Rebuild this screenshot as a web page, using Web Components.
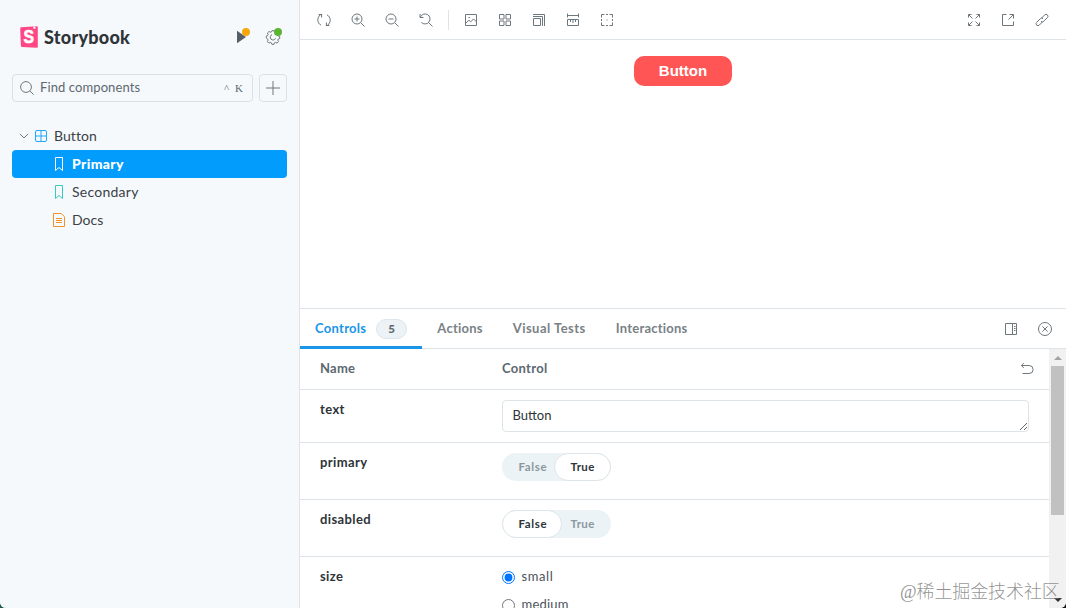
<!DOCTYPE html>
<html lang="en">
<head>
<meta charset="utf-8">
<title>Button / Primary - Storybook</title>
<style>
  * {
    box-sizing: border-box;
  }
  body {
    margin: 0;
    height: 608px;
    overflow: hidden;
    font-family: Lato, "Liberation Sans", sans-serif;
    font-size: 14px;
    color: #2e3438;
    background: linear-gradient(90deg, #1f5b49 50%, #1c1c1c 50%);
    --border: #dde3e6;
    --blue: #029cfd;
    --icon: #6d777e;
  }
</style>
</head>
<body>
<sb-app>
  <sb-sidebar slot="sidebar">
    <sb-tree-item icon="component" type="component" style="--ls: .05px">Button</sb-tree-item>
    <sb-tree-item icon="bookmark" type="story" selected style="--ls: .35px">Primary</sb-tree-item>
    <sb-tree-item icon="bookmark" type="story" style="--ls: .25px">Secondary</sb-tree-item>
    <sb-tree-item icon="document" type="docs" style="--ls: .05px">Docs</sb-tree-item>
  </sb-sidebar>
  <sb-toolbar slot="toolbar"></sb-toolbar>
  <story-button slot="preview">Button</story-button>
  <sb-panel slot="panel">
    <sb-tab slot="tabs" active count="5" style="--ls: .28px">Controls</sb-tab>
    <sb-tab slot="tabs" style="--ls: .22px">Actions</sb-tab>
    <sb-tab slot="tabs" style="--ls: .48px">Visual Tests</sb-tab>
    <sb-tab slot="tabs" style="--ls: .22px">Interactions</sb-tab>
    <sb-arg-row head name="Name"><span>Control</span><sb-icon name="undo"></sb-icon></sb-arg-row>
    <sb-arg-row name="text" style="--h: 53px"><sb-textarea>Button</sb-textarea></sb-arg-row>
    <sb-arg-row name="primary"><sb-toggle value="true"></sb-toggle></sb-arg-row>
    <sb-arg-row name="disabled"><sb-toggle value="false"></sb-toggle></sb-arg-row>
    <sb-arg-row name="size" style="--h: 110px">
      <sb-radio checked style="--ls: .6px">small</sb-radio>
      <sb-radio>medium</sb-radio>
    </sb-arg-row>
  </sb-panel>
</sb-app>
<water-mark>稀土掘金技术社区</water-mark>

<script>
const icons = {
  sync: '<path d="M5.2 1.2C2.6 1.5.8 4 .8 6.8c0 2.3 1.200 4.400 3.200 5.400M1.600 1.500h3v3M8.800 12.800c2.600-.3 4.400-2.800 4.400-5.600 0-2.300-1.200-4.400-3.200-5.400M12.400 12.500h-3v-3"/>',
  zoom: '<circle cx="6" cy="6" r="5"/><path d="M9.7 9.7l3.8 3.8M3.5 6h5M6 3.5v5"/>',
  zoomout: '<circle cx="6" cy="6" r="5"/><path d="M9.7 9.7l3.8 3.8M3.5 6h5"/>',
  zoomreset: '<path d="M1 1v3.5h3.5M1.3 4.3A5 5 0 1 1 2.4 9.4M9.7 9.7l3.8 3.8"/>',
  photo: '<path d="M1.5 1.5h11v11h-11zM1.5 10.5l3.4-3.3 1.8 1.7 2.8-3 3 3M4.5 4.5h1.5"/>',
  grid: '<path d="M1.5 1.5H6V6H1.5zM8 1.5h4.500V6H8zM1.5 8H6v4.500H1.5zM8 8h4.500v4.500H8z"/>',
  viewport: '<path d="M1.5 5.5h7v7h-7zM1 3.5h9.5v9.5M1 1.5h11.5V13"/>',
  ruler: '<path d="M1.5.5v4M12.5.5v4M1.5 2.5h11M1.5 6.5h11v6h-11zM4.5 7v2M7 7v3M9.5 7v2"/>',
  outline: '<path d="M1.5 4.5v-3h3M9.5 1.5h3v3M12.5 9.5v3h-3M4.5 12.5h-3v-3M6 1.5h2M6 12.5h2M1.5 6v2M12.5 6v2M6.5 7h1"/>',
  expand: '<path d="M1.5 4.5v-3h3M9.5 1.5h3v3M12.5 9.5v3h-3M4.5 12.5h-3v-3M1.5 1.5l4 4M12.5 1.5l-4 4M12.5 12.5l-4-4M1.5 12.5l4-4"/>',
  share: '<path d="M5.5 1.5h-4v11h11v-4M8.5 1.5h4v4M12.5 1.5l-5 5"/>',
  link: '<path d="M6.3 5.3l3.400-3.400a1.900 1.900 0 0 1 2.700 2.700L8.700 8.300a1.900 1.900 0 0 1-2.700 0M7.700 8.700l-3.400 3.400a1.900 1.900 0 0 1-2.700-2.700L5.300 5.700a1.900 1.900 0 0 1 2.700 0"/>',
  sidebaralt: '<path d="M1.5 1.5h11v11h-11zM8.5 1.5v11M10 4.5h1.5M10 6.5h1.5M10 8.5h1.5"/>',
  close: '<circle cx="7" cy="7" r="6.5"/><path d="M4.4 4.4l5.2 5.2M9.6 4.4L4.4 9.6"/>',
  undo: '<path d="M3.800 1.200L1.300 3.500l2.500 2.300M1.500 3.500h7.600a3.500 3.500 0 0 1 0 8H2.500"/>',
  search: '<circle cx="6" cy="6" r="5.4"/><path d="M9.9 9.9l3.7 3.7"/>',
  plus: '<path d="M7 0v14M0 7h14"/>',
  play: '<path d="M3 .8l9 6.2-9 6.2z" fill="currentColor" stroke="none"/>',
  cog: '<path d="M5.9.7h2.2l.5 1.6 1 .4L11 2l1.6 1.5-.8 1.5.4 1 1.5.5v2.1l-1.5.5-.4 1 .7 1.5L11 13.1l-1.5-.7-1 .4-.5 1.5H5.9l-.5-1.5-1-.4-1.5.7-1.5-1.5.7-1.5-.4-1L.3 8.1V6l1.4-.5.4-1L1.4 3 3 1.5l1.5.7 1-.4z"/><path d="M9.6 8.3A2.8 2.8 0 1 1 6 4.6"/>',
  chevron: '<path d="M2.8 4.8L7 9l4.2-4.2"/>',
  component: '<rect x="1.5" y="1.5" width="11" height="11" rx="1.5"/><path d="M7 1.5v11M1.5 7h11"/>',
  bookmark: '<path d="M3.5.5h7v13L7 10.5l-3.5 3z"/>',
  document: '<path d="M1.5.5h7.8l3.2 3.2v9.8h-11zM4 5.5h6M4 7.5h6M4 9.5h6"/>'
}

class SbIcon extends HTMLElement {
  connectedCallback() {
    const shadow = this.attachShadow({ mode: "open" })
    shadow.innerHTML = /* html */ `
      <style>
        :host {
          display: inline-flex;
          flex: none;
          width: 14px;
          height: 14px;
          color: var(--icon);
        }
        svg {
          width: 100%;
          height: 100%;
          overflow: visible;
          fill: none;
          stroke: currentColor;
          stroke-width: 1;
        }
      </style>
      <svg viewBox="0 0 14 14">${icons[this.getAttribute("name")]}</svg>
    `
  }
}

class SbApp extends HTMLElement {
  connectedCallback() {
    this.attachShadow({ mode: "open" }).innerHTML = /* html */ `
      <style>
        :host {
          display: grid;
          grid-template-columns: 300px 1fr;
          width: 1066px;
          height: 608px;
          overflow: hidden;
          background: #fff;
          border-radius: 0 0 6px 6px;
        }
        main {
          display: grid;
          grid-template-rows: 40px 268px 300px;
          min-width: 0;
        }
        .preview {
          display: flex;
          justify-content: center;
          align-items: flex-start;
          padding-top: 16px;
        }
      </style>
      <slot name="sidebar"></slot>
      <main>
        <slot name="toolbar"></slot>
        <div class="preview"><slot name="preview"></slot></div>
        <slot name="panel"></slot>
      </main>
    `
  }
}

class SbSidebar extends HTMLElement {
  connectedCallback() {
    this.attachShadow({ mode: "open" }).innerHTML = /* html */ `
      <style>
        * {
          box-sizing: border-box;
        }
        :host {
          display: block;
          box-sizing: border-box;
          height: 608px;
          padding: 23px 12px 0;
          background: #f6f9fc;
          border-right: 1px solid var(--border);
        }
        header {
          display: flex;
          align-items: center;
          height: 28px;
          padding-left: 8px;
        }
        .logo {
          width: 18px;
          height: 22px;
          margin-right: 6px;
        }
        .logo text {
          font: bold 18px "Liberation Sans", sans-serif;
          stroke: #fff;
          stroke-width: .6px;
        }
        .brand {
          flex: 1;
          font-size: 18px;
          font-weight: 900;
          letter-spacing: .25px;
        }
        .action {
          display: flex;
          position: relative;
          align-items: center;
          justify-content: center;
          width: 28px;
          height: 28px;
          margin-left: 4px;
        }
        .action sb-icon[name="play"] {
          color: #565e66;
        }
        .action i {
          position: absolute;
          top: 5px;
          right: 5px;
          width: 8px;
          height: 8px;
          border-radius: 50%;
        }
        .search {
          display: flex;
          gap: 6px;
          margin: 23px 0 20px;
        }
        .field, .add {
          display: flex;
          align-items: center;
          height: 28px;
          border: 1px solid #d9e1e6;
          border-radius: 4px;
        }
        .field {
          flex: 1;
          padding: 0 9px 0 7px;
          color: #5c6870;
        }
        .field span {
          flex: 1;
          margin-left: 6px;
          padding-bottom: 2px;
          font-size: 13px;
          letter-spacing: .1px;
        }
        kbd {
          margin-left: 6px;
          padding-bottom: 1px;
          font: 11px "Liberation Serif", serif;
        }
        .add {
          width: 28px;
          justify-content: center;
        }
      </style>
      <header>
        <svg class="logo" viewBox="0 0 18 22">
          <path d="M1 1.3L17 .3q.8 0 .8.9v19.7q0 .9-.9.8L1.800 21q-.8 0-.9-.9L.2 2.300q0-.9.8-1z" fill="#ff4785"/>
          <text x="3.6" y="17.3" textLength="10.5" lengthAdjust="spacingAndGlyphs" fill="#fff">S</text>
          <path d="M13.4.6l2-.1v2.6l-1-.7-1 .7z" fill="#fff"/>
        </svg>
        <span class="brand">Storybook</span>
        <span class="action"><sb-icon name="play"></sb-icon><i style="background:#f6a80b"></i></span>
        <span class="action"><sb-icon name="cog"></sb-icon><i style="background:#5bb532"></i></span>
      </header>
      <div class="search">
        <div class="field">
          <sb-icon name="search"></sb-icon><span>Find components</span><kbd>^</kbd><kbd>K</kbd>
        </div>
        <div class="add"><sb-icon name="plus"></sb-icon></div>
      </div>
      <slot></slot>
    `
  }
}

class SbTreeItem extends HTMLElement {
  connectedCallback() {
    const type = this.getAttribute("type")
    const chevron = type === "component" ? '<sb-icon class="chevron" name="chevron"></sb-icon>' : ""
    this.attachShadow({ mode: "open" }).innerHTML = /* html */ `
      <style>
        :host {
          display: flex;
          align-items: center;
          height: 28px;
          padding-left: 40px;
          border-radius: 4px;
          color: #3a4146;
          letter-spacing: var(--ls, .2px);
        }
        :host([type="component"]) {
          padding-left: 5px;
        }
        :host([selected]) {
          background: var(--blue);
          color: #fff;
          font-weight: 900;
        }
        .type {
          margin-right: 6px;
          color: #37c9c0;
        }
        :host([type="component"]) .type {
          color: #1ea7fd;
        }
        :host([type="docs"]) .type {
          color: #f0932b;
        }
        :host([selected]) .type {
          color: #fff;
        }
        .chevron {
          margin-right: 3px;
        }
        .label {
          padding-bottom: 2px;
        }
      </style>
      ${chevron}<sb-icon class="type" name="${this.getAttribute("icon")}"></sb-icon>
      <span class="label"><slot></slot></span>
    `
  }
}

class SbToolbar extends HTMLElement {
  connectedCallback() {
    const tools = names => names.map(name => `<sb-icon name="${name}"></sb-icon>`).join("")
    this.attachShadow({ mode: "open" }).innerHTML = /* html */ `
      <style>
        :host, div {
          display: flex;
          align-items: center;
        }
        :host {
          box-sizing: border-box;
          padding: 0 17px;
          border-bottom: 1px solid var(--border);
        }
        div {
          gap: 20px;
        }
        hr {
          width: 1px;
          height: 20px;
          margin: 0 15px;
          border: 0;
          background: var(--border);
        }
        .right {
          margin-left: auto;
        }
      </style>
      <div>${tools(["sync", "zoom", "zoomout", "zoomreset"])}</div>
      <hr>
      <div>${tools(["photo", "grid", "viewport", "ruler", "outline"])}</div>
      <div class="right">${tools(["expand", "share", "link"])}</div>
    `
  }
}

class StoryButton extends HTMLElement {
  connectedCallback() {
    this.attachShadow({ mode: "open" }).innerHTML = /* html */ `
      <style>
        button {
          display: block;
          width: 98px;
          height: 30px;
          padding: 0;
          border: 0;
          border-radius: 10px;
          background: #ff5555;
          color: #fff;
          font: bold 15px/30px "Liberation Sans", sans-serif;
        }
      </style>
      <button><slot></slot></button>
    `
  }
}

class SbPanel extends HTMLElement {
  connectedCallback() {
    this.attachShadow({ mode: "open" }).innerHTML = /* html */ `
      <style>
        :host {
          display: grid;
          grid-template-rows: 40px 259px;
          box-sizing: border-box;
          border-top: 1px solid var(--border);
        }
        nav {
          display: flex;
          align-items: center;
          box-sizing: border-box;
          padding-right: 14px;
          border-bottom: 1px solid var(--border);
        }
        nav > sb-icon {
          margin-left: 20px;
        }
        .space {
          flex: 1;
        }
        .body {
          display: grid;
          grid-template-columns: 1fr 17px;
          overflow: hidden;
        }
        .args {
          overflow: hidden;
        }
        .scrollbar {
          display: flex;
          flex-direction: column;
          align-items: center;
          box-sizing: border-box;
          padding: 7px 0 6px;
          background: #f1f1f1;
        }
        .up, .down {
          border: 4px solid transparent;
          border-top: 0;
          border-bottom: 4px solid #a3a3a3;
        }
        .down {
          border-top: 4px solid #333;
          border-bottom: 0;
          margin-top: auto;
        }
        .thumb {
          width: 13px;
          height: 149px;
          margin-top: 6px;
          background: #c1c1c1;
        }
      </style>
      <nav>
        <slot name="tabs"></slot>
        <span class="space"></span>
        <sb-icon name="sidebaralt"></sb-icon>
        <sb-icon name="close"></sb-icon>
      </nav>
      <div class="body">
        <div class="args"><slot></slot></div>
        <div class="scrollbar">
          <span class="up"></span>
          <span class="thumb"></span>
          <span class="down"></span>
        </div>
      </div>
    `
  }
}

class SbTab extends HTMLElement {
  connectedCallback() {
    const count = this.getAttribute("count")
    this.attachShadow({ mode: "open" }).innerHTML = /* html */ `
      <style>
        :host {
          display: flex;
          align-items: center;
          box-sizing: border-box;
          height: 40px;
          padding: 0 15px;
          border-bottom: 3px solid transparent;
          border-top: 3px solid transparent;
          color: #798186;
          font-size: 13px;
          font-weight: bold;
          letter-spacing: var(--ls, .15px);
        }
        :host([active]) {
          color: #1b95e8;
          border-bottom-color: #1b95e8;
        }
        .label {
          padding-bottom: 2px;
        }
        b {
          box-sizing: border-box;
          width: 31px;
          height: 20px;
          margin-left: 10px;
          border: 1px solid #dce6eb;
          border-radius: 10px;
          background: #ecf2f6;
          color: #5c6870;
          font-size: 11.5px;
          line-height: 17px;
          text-align: center;
        }
      </style>
      <span class="label"><slot></slot></span>${count ? `<b>${count}</b>` : ""}
    `
  }
}

class SbArgRow extends HTMLElement {
  connectedCallback() {
    this.attachShadow({ mode: "open" }).innerHTML = /* html */ `
      <style>
        :host {
          display: grid;
          grid-template-columns: 182px 527px;
          box-sizing: border-box;
          height: var(--h, 57px);
          padding: 10px 20px 0;
          border-bottom: 1px solid var(--border);
          font-size: 13px;
        }
        .name {
          font-weight: bold;
          line-height: 18px;
          letter-spacing: .4px;
        }
        :host([head]) {
          height: 41px;
          color: #5c6870;
          font-weight: bold;
        }
        :host([head]) .name {
          letter-spacing: .25px;
        }
        :host([head]) .control {
          display: flex;
          justify-content: space-between;
          width: 532px;
          line-height: 18px;
          letter-spacing: .3px;
        }
        ::slotted(sb-icon) {
          margin-top: 3px;
        }
      </style>
      <div class="name">${this.getAttribute("name")}</div>
      <div class="control"><slot></slot></div>
    `
  }
}

class SbTextarea extends HTMLElement {
  connectedCallback() {
    this.attachShadow({ mode: "open" }).innerHTML = /* html */ `
      <style>
        :host {
          display: block;
        }
        div {
          box-sizing: border-box;
          height: 32px;
          padding: 0 9.5px;
          border: 1px solid var(--border);
          border-radius: 4px;
          line-height: 28px;
          overflow: hidden;
          resize: vertical;
        }
      </style>
      <div><slot></slot></div>
    `
  }
}

class SbToggle extends HTMLElement {
  connectedCallback() {
    this.attachShadow({ mode: "open" }).innerHTML = /* html */ `
      <style>
        :host {
          display: inline-flex;
          height: 28px;
          border-radius: 14px;
          background: #ecf3f6;
          color: #8b979f;
          font-size: 11.5px;
          font-weight: bold;
          letter-spacing: .6px;
        }
        span {
          box-sizing: border-box;
          height: 28px;
          border: 1px solid transparent;
          border-radius: 14px;
          line-height: 26px;
        }
        .false {
          width: 60px;
          padding-left: 15.5px;
        }
        .true {
          width: 57px;
          margin-left: -8px;
          padding-left: 15.5px;
          letter-spacing: .4px;
        }
        :host([value="true"]) .true, :host([value="false"]) .false {
          border-color: #dde5e9;
          background: #fff;
          color: #2e3438;
        }
      </style>
      <span class="false">False</span>
      <span class="true">True</span>
    `
  }
}

class SbRadio extends HTMLElement {
  connectedCallback() {
    const checked = this.hasAttribute("checked") ? "checked" : ""
    this.attachShadow({ mode: "open" }).innerHTML = /* html */ `
      <style>
        :host, label {
          display: flex;
          align-items: center;
        }
        :host {
          height: 20px;
          margin-bottom: 8px;
          color: #4a535a;
          letter-spacing: var(--ls, .2px);
        }
        input {
          width: 13px;
          height: 13px;
          margin: 0 6.5px 0 0;
        }
        span {
          padding-bottom: 2px;
        }
      </style>
      <label><input type="radio" ${checked}><span><slot></slot></span></label>
    `
  }
}

class WaterMark extends HTMLElement {
  connectedCallback() {
    this.attachShadow({ mode: "open" }).innerHTML = /* html */ `
      <style>
        :host {
          position: absolute;
          top: 580px;
          left: 900px;
          font: 300 18px/24px "Liberation Serif", "Noto Sans CJK SC", serif;
          letter-spacing: -.1px;
          color: rgba(110, 110, 110, .75);
          white-space: nowrap;
        }
      </style>
      @<slot></slot>
    `
  }
}

customElements.define("sb-icon", SbIcon)
customElements.define("sb-app", SbApp)
customElements.define("sb-sidebar", SbSidebar)
customElements.define("sb-tree-item", SbTreeItem)
customElements.define("sb-toolbar", SbToolbar)
customElements.define("story-button", StoryButton)
customElements.define("sb-panel", SbPanel)
customElements.define("sb-tab", SbTab)
customElements.define("sb-arg-row", SbArgRow)
customElements.define("sb-textarea", SbTextarea)
customElements.define("sb-toggle", SbToggle)
customElements.define("sb-radio", SbRadio)
customElements.define("water-mark", WaterMark)
</script>
</body>
</html>
